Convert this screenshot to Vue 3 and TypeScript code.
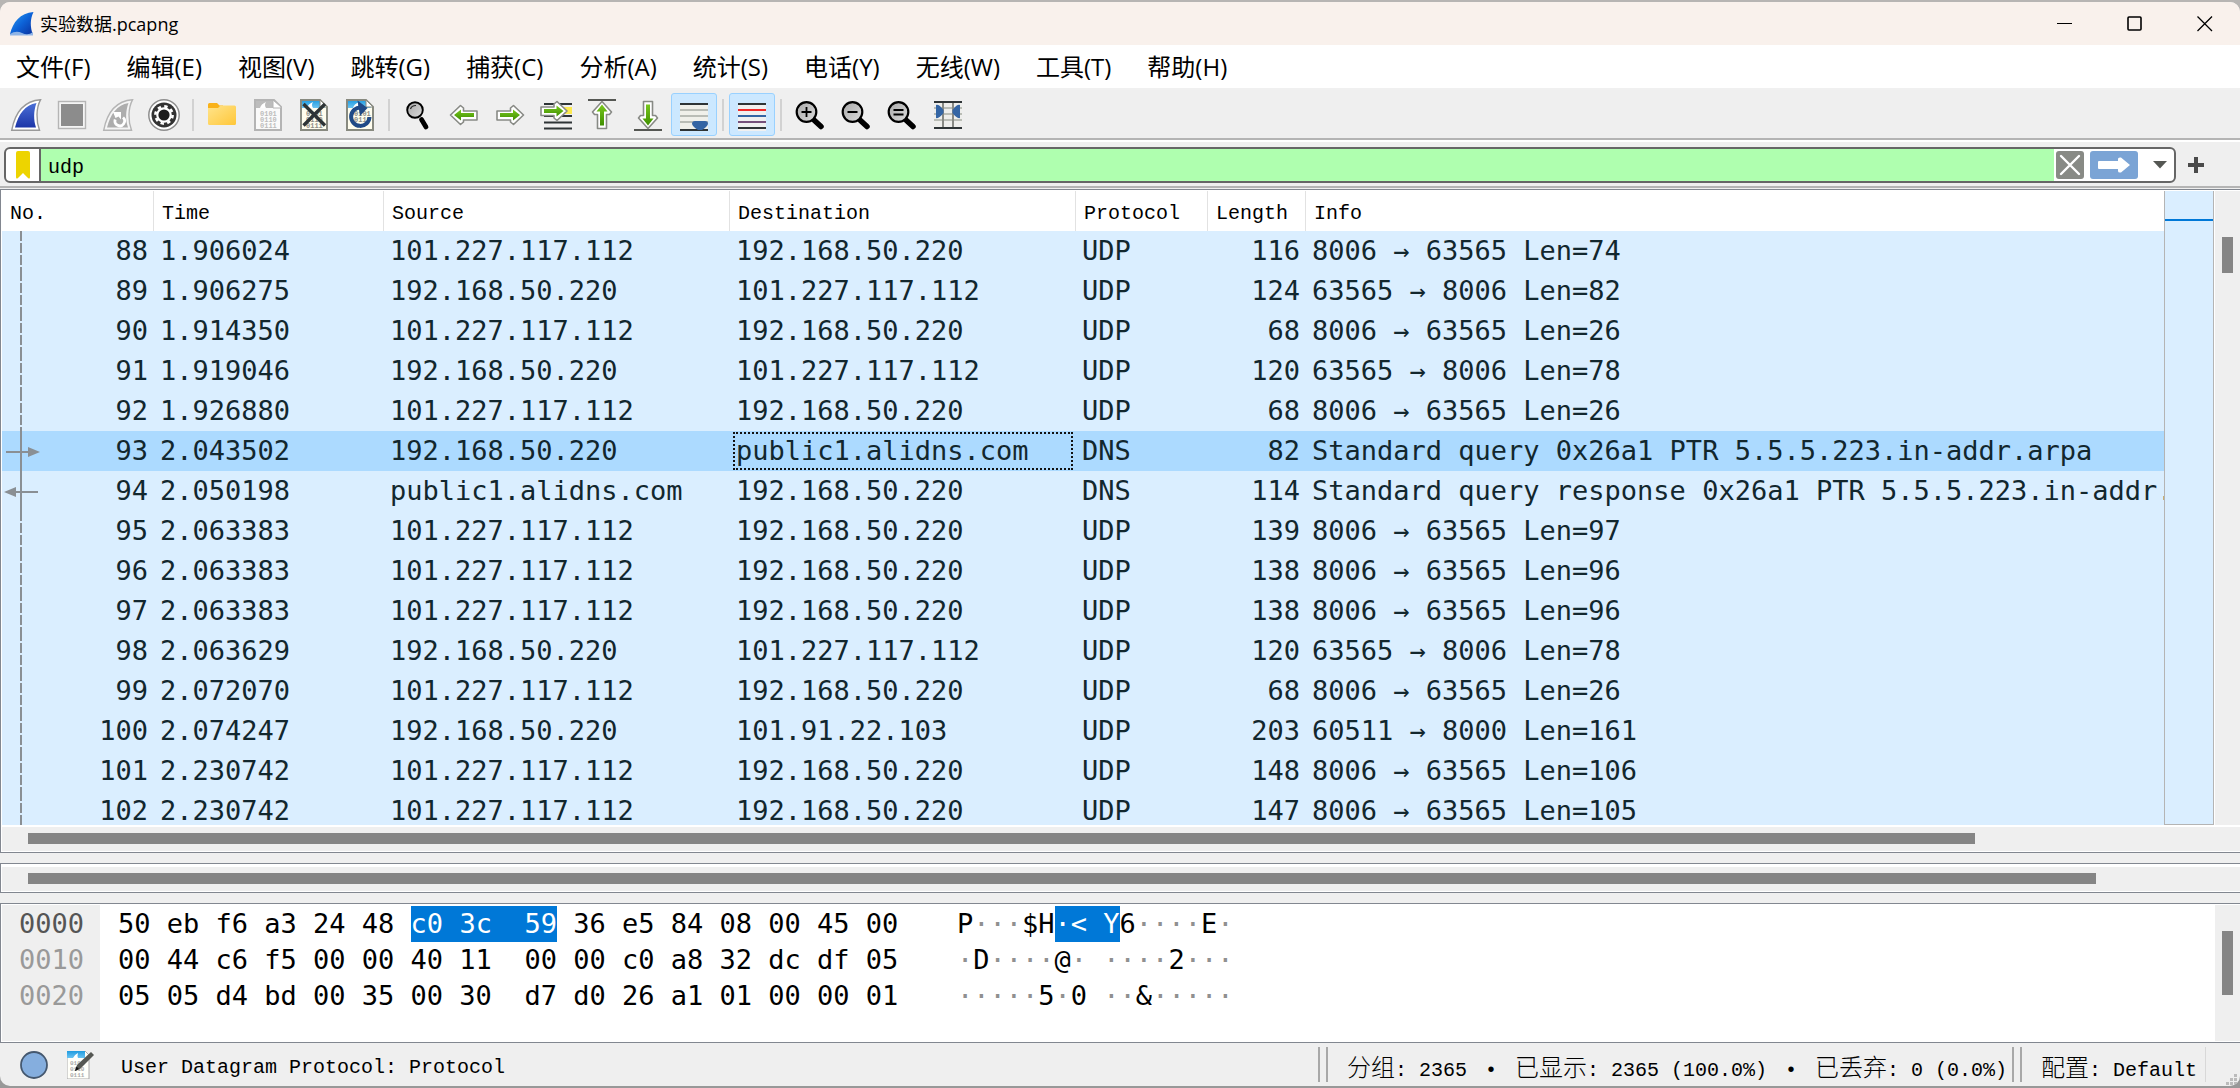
<script setup lang="ts">
import { ref } from 'vue'

interface Packet {
  no: number
  time: string
  src: string
  dst: string
  proto: string
  len: number
  info: string
  link?: 'out' | 'in'
}

interface HexRun {
  text: string
  kind?: 'hl' | 'dim'
}

interface HexLine {
  offset: string
  bytes: HexRun[]
  ascii: HexRun[]
}

const A = '101.227.117.112'
const B = '192.168.50.220'
const D = 'public1.alidns.com'

const menus = ['文件(F)', '编辑(E)', '视图(V)', '跳转(G)', '捕获(C)', '分析(A)', '统计(S)', '电话(Y)', '无线(W)', '工具(T)', '帮助(H)']
const headers = ['No.', 'Time', 'Source', 'Destination', 'Protocol', 'Length', 'Info']

const packets: Packet[] = [
  { no: 88, time: '1.906024', src: A, dst: B, proto: 'UDP', len: 116, info: '8006 → 63565 Len=74' },
  { no: 89, time: '1.906275', src: B, dst: A, proto: 'UDP', len: 124, info: '63565 → 8006 Len=82' },
  { no: 90, time: '1.914350', src: A, dst: B, proto: 'UDP', len: 68, info: '8006 → 63565 Len=26' },
  { no: 91, time: '1.919046', src: B, dst: A, proto: 'UDP', len: 120, info: '63565 → 8006 Len=78' },
  { no: 92, time: '1.926880', src: A, dst: B, proto: 'UDP', len: 68, info: '8006 → 63565 Len=26' },
  { no: 93, time: '2.043502', src: B, dst: D, proto: 'DNS', len: 82, info: 'Standard query 0x26a1 PTR 5.5.5.223.in-addr.arpa', link: 'out' },
  { no: 94, time: '2.050198', src: D, dst: B, proto: 'DNS', len: 114, info: 'Standard query response 0x26a1 PTR 5.5.5.223.in-addr.arpa', link: 'in' },
  { no: 95, time: '2.063383', src: A, dst: B, proto: 'UDP', len: 139, info: '8006 → 63565 Len=97' },
  { no: 96, time: '2.063383', src: A, dst: B, proto: 'UDP', len: 138, info: '8006 → 63565 Len=96' },
  { no: 97, time: '2.063383', src: A, dst: B, proto: 'UDP', len: 138, info: '8006 → 63565 Len=96' },
  { no: 98, time: '2.063629', src: B, dst: A, proto: 'UDP', len: 120, info: '63565 → 8006 Len=78' },
  { no: 99, time: '2.072070', src: A, dst: B, proto: 'UDP', len: 68, info: '8006 → 63565 Len=26' },
  { no: 100, time: '2.074247', src: B, dst: '101.91.22.103', proto: 'UDP', len: 203, info: '60511 → 8000 Len=161' },
  { no: 101, time: '2.230742', src: A, dst: B, proto: 'UDP', len: 148, info: '8006 → 63565 Len=106' },
  { no: 102, time: '2.230742', src: A, dst: B, proto: 'UDP', len: 147, info: '8006 → 63565 Len=105' },
]

const hexLines: HexLine[] = [
  {
    offset: '0000',
    bytes: [{ text: '50 eb f6 a3 24 48 ' }, { text: 'c0 3c  59', kind: 'hl' }, { text: ' 36 e5 84 08 00 45 00' }],
    ascii: [{ text: 'P' }, { text: '···', kind: 'dim' }, { text: '$H' }, { text: '·< Y', kind: 'hl' }, { text: '6' }, { text: '····', kind: 'dim' }, { text: 'E' }, { text: '·', kind: 'dim' }],
  },
  {
    offset: '0010',
    bytes: [{ text: '00 44 c6 f5 00 00 40 11  00 00 c0 a8 32 dc df 05' }],
    ascii: [{ text: '·', kind: 'dim' }, { text: 'D' }, { text: '····', kind: 'dim' }, { text: '@' }, { text: '· ····', kind: 'dim' }, { text: '2' }, { text: '···', kind: 'dim' }],
  },
  {
    offset: '0020',
    bytes: [{ text: '05 05 d4 bd 00 35 00 30  d7 d0 26 a1 01 00 00 01' }],
    ascii: [{ text: '·····', kind: 'dim' }, { text: '5' }, { text: '·', kind: 'dim' }, { text: '0' }, { text: ' ··', kind: 'dim' }, { text: '&' }, { text: '·····', kind: 'dim' }],
  },
]

const selected = ref(93)
const filter = ref('udp')
const listThumb = ref(88)
const detailThumb = ref(93.5)
</script>

<template>
  <div class="desktop">
    <main class="window">
      <header class="titlebar">
        <svg class="logo" viewBox="0 0 24 24">
          <defs>
            <linearGradient id="lg" x1="0" y1="0" x2="1" y2="1">
              <stop offset="0" stop-color="#2fa4f0" /><stop offset=".5" stop-color="#0d63d8" /><stop offset="1" stop-color="#0a2f9c" />
            </linearGradient>
          </defs>
          <path d="M0 22C3 10 10 1 23.500 0C20 7 20 15 23 23H0Z" fill="url(#lg)" />
          <path d="M0 22Q6 18 12 21T23 20V23.500H0Z" fill="#8fb4e6" />
        </svg>
        <h1>实验数据.pcapng</h1>
        <div class="winbtns">
          <button aria-label="Minimize"><svg viewBox="0 0 16 16"><path d="M0 7.500H15" /></svg></button>
          <button aria-label="Maximize"><svg viewBox="0 0 16 16"><rect x="1" y="1" width="13" height="13" rx="1" stroke-width="1.600" /></svg></button>
          <button aria-label="Close"><svg viewBox="0 0 16 16"><path d="M.5.5L15 15M15 .5L.5 15" stroke-width="1.300" /></svg></button>
        </div>
      </header>

      <nav class="menubar">
        <button v-for="m in menus" :key="m">{{ m }}</button>
      </nav>

      <div class="toolbar">
        <svg width="0" height="0" class="defs">
          <defs>
            <linearGradient id="fin" x1="0" y1="0" x2="0" y2="1"><stop offset="0" stop-color="#4a6fd6" /><stop offset="1" stop-color="#1c35a8" /></linearGradient>
            <linearGradient id="fold" x1="0" y1="0" x2="1" y2="1"><stop offset="0" stop-color="#ffe48c" /><stop offset="1" stop-color="#ffc739" /></linearGradient>
            <linearGradient id="grn" x1="0" y1="0" x2="0" y2="1"><stop offset="0" stop-color="#79c81e" /><stop offset="1" stop-color="#3f8f00" /></linearGradient>
            <linearGradient id="sky" x1="0" y1="0" x2="0" y2="1"><stop offset="0" stop-color="#1f9be0" /><stop offset="1" stop-color="#6cc4f2" /></linearGradient>
            <linearGradient id="lens" x1="0" y1="0" x2="1" y2="1"><stop offset="0" stop-color="#a8a8a8" /><stop offset="1" stop-color="#dcdcdc" /></linearGradient>
            <symbol id="doc" viewBox="0 0 32 32">
              <path d="M3 1H22L29 8V31H3Z" fill="#fffdee" />
              <path d="M3 1H22L27 9H3Z" fill="url(#sky)" />
              <path d="M9 9Q10 5 15 3Q13 6 15 9Z" fill="#fff" />
              <path d="M3 1H22L29 8V31H3Z" fill="none" stroke="#888a80" stroke-width="2" />
              <path d="M22 1L29 8H22Z" fill="#fff" stroke="#888a80" />
            </symbol>
            <symbol id="glass" viewBox="0 0 32 32">
              <path d="M20.500 21.500L27 27.500" stroke="#000" stroke-width="5.500" stroke-linecap="round" />
              <circle cx="12.500" cy="13" r="9.800" fill="url(#lens)" stroke="#000" stroke-width="2.200" />
            </symbol>
          </defs>
        </svg>
        <button aria-label="Start capture">
          <svg viewBox="0 0 32 32"><path d="M1.700 31.300C5 14 14 2 30.500.8C26 9 26 22 29.500 31.300Z" fill="#fff" stroke="#9a9a9a" stroke-width="1.400" /><path d="M5 28.500C8.500 15 15 6 26.500 4C23.500 12 23.500 21 26 28.500Z" fill="url(#fin)" /></svg>
        </button>
        <button aria-label="Stop capture">
          <svg viewBox="0 0 32 32"><rect x="2.500" y="2.500" width="27" height="27" fill="#f4f4f4" stroke="#b5b5b5" stroke-width="1.400" /><rect x="5" y="5" width="22" height="22" fill="#8c8c8c" /></svg>
        </button>
        <button aria-label="Restart capture">
          <svg viewBox="0 0 32 32"><path d="M1.700 31.300C5 14 14 2 30.500.8C26 9 26 22 29.500 31.300Z" fill="#f4f4f4" stroke="#b5b5b5" stroke-width="1.400" /><path d="M5 28.500C8.500 15 15 6 26.500 4C23.500 12 23.500 21 26 28.500Z" fill="#adadad" /><path d="M13.200 20.500A4.800 4.800 0 1 0 21 18.500" fill="none" stroke="#fff" stroke-width="2.800" /><path d="M11 13H19V20.500L16.500 17.500L13.500 19Z" fill="#fff" /></svg>
        </button>
        <button aria-label="Capture options">
          <svg viewBox="0 0 32 32"><circle cx="16" cy="16" r="15.200" fill="#fff" stroke="#8e8e8e" stroke-width="1.500" /><circle cx="16" cy="16" r="12.500" fill="#333" /><circle cx="16" cy="16" r="7.800" fill="#fff" /><circle cx="16" cy="16" r="8.600" fill="none" stroke="#fff" stroke-width="2.600" stroke-dasharray="3.400 3.350" /><circle cx="16" cy="16" r="5.600" fill="#1c1c1c" /></svg>
        </button>
        <i class="sep"></i>
        <button aria-label="Open file">
          <svg viewBox="0 0 32 32"><path d="M2 5.500Q2 4 3.500 4H11L13.500 6.500H17V10H2Z" fill="#f9b21a" /><path d="M2 9H12L14.500 6.500H28.500Q30 6.500 30 8V24.500Q30 26 28.500 26H3.500Q2 26 2 24.500Z" fill="url(#fold)" /></svg>
        </button>
        <button aria-label="Save file">
          <svg viewBox="0 0 32 32"><path d="M3 1H22L29 8V31H3Z" fill="#fafafa" stroke="#b4b4b4" stroke-width="2" /><path d="M4 2H21V9H4Z" fill="#bcbcbc" /><path d="M8 9Q9 5 14 3Q12 6 14 9Z" fill="#fff" /><path d="M21 1L29 8V9H21Z" fill="#fff" stroke="#b4b4b4" /><g class="bits faint"><text x="8" y="17">0101</text><text x="8" y="23">0110</text><text x="8" y="29">0111</text></g></svg>
        </button>
        <button aria-label="Close file">
          <svg viewBox="0 0 32 32"><use href="#doc" /><g class="bits"><text x="8" y="17">0101</text><text x="8" y="23">0110</text><text x="8" y="29">0111</text></g><path d="M5.500 5L27 26.500M27 5L5.500 26.500" stroke="#2e3436" stroke-width="3.400" /></svg>
        </button>
        <button aria-label="Reload file">
          <svg viewBox="0 0 32 32"><use href="#doc" /><g class="bits"><text x="10" y="17">0101</text><text x="10" y="23">0110</text></g><path d="M17 8.500A9.200 9.200 0 1 0 25.500 18" fill="none" stroke="#204a87" stroke-width="4" /><path d="M13.500 1.500L23.500 9L16 17Z" fill="#204a87" /></svg>
        </button>
        <i class="sep"></i>
        <button aria-label="Find packet">
          <svg viewBox="0 0 32 32"><path d="M19.500 20.500L24 28" stroke="#000" stroke-width="4.800" stroke-linecap="round" /><circle cx="13" cy="11" r="7.800" fill="url(#lens)" stroke="#000" stroke-width="1.900" /><path d="M8.500 10Q9.500 6.500 14 6.500" fill="none" stroke="#222" stroke-width="1.200" /></svg>
        </button>
        <button aria-label="Go back">
          <svg viewBox="0 0 32 32"><path d="M2.500 16L12.500 6.500L15.500 9V12H29V21H15.500V23L12.500 25.500Z" class="arw" /><path d="M6 16L13 10.500V14H26V18H13V21.500Z" fill="url(#grn)" /></svg>
        </button>
        <button aria-label="Go forward">
          <svg viewBox="0 0 32 32"><path d="M29.500 16L19.500 6.500L16.500 9V12H3V21H16.500V23L19.500 25.500Z" class="arw" /><path d="M26 16L19 10.500V14H6V18H19V21.500Z" fill="url(#grn)" /></svg>
        </button>
        <button aria-label="Go to packet">
          <svg viewBox="0 0 32 32"><path d="M22 8H32V15H22Z" fill="#fce94f" /><path d="M4 5H32M4 17H32M4 23.500H32M4 29.500H32" stroke="#2e3436" stroke-width="2" /><path d="M27 12L17 2.500L14 5V8H1V16.500H14V19L17 21.500Z" class="arw" /><path d="M23.500 12L16.500 6.500V10H4V14H16.500V17.500Z" fill="url(#grn)" /></svg>
        </button>
        <button aria-label="First packet">
          <svg viewBox="0 0 32 32"><path d="M2 1H30" stroke="#555753" stroke-width="2" /><path d="M16 2.500L25.500 13L23.500 15.500H20.500V29.500H11.500V15.500H8.500L6.500 13Z" class="arw" /><path d="M16 5.500L21.500 12.500H18V26.500H14V12.500H10.500Z" fill="url(#grn)" /></svg>
        </button>
        <button aria-label="Last packet">
          <svg viewBox="0 0 32 32"><path d="M2 31H30" stroke="#555753" stroke-width="2" /><path d="M16 29.500L25.500 19L23.500 16.500H20.500V2.500H11.500V16.500H8.500L6.500 19Z" class="arw" /><path d="M16 26.500L21.500 19.500H18V5.500H14V19.500H10.500Z" fill="url(#grn)" /></svg>
        </button>
        <button class="on" aria-label="Auto scroll" aria-pressed="true">
          <svg viewBox="0 0 32 32"><path d="M2 4H30V32H2Z" fill="#f0f0ea" /><path d="M2 11H30M2 17H30M2 23H30" stroke="#babdb6" stroke-width="2" /><path d="M2 5H30M2 31H30" stroke="#2e3436" stroke-width="2" /><path d="M14 25Q14 22 17 22H27Q30 22 30 25Q29 28 24 31H20Q15 28 14 25Z" fill="#3465a4" /></svg>
        </button>
        <i class="sep"></i>
        <button class="on" aria-label="Colorize" aria-pressed="true">
          <svg viewBox="0 0 32 32"><path d="M2 4H30V32H2Z" fill="#f0f0f0" /><path d="M2 5H30M2 29H30" stroke="#2e3436" stroke-width="2" /><path d="M2 11H30" stroke="#ef2929" stroke-width="2" /><path d="M2 17H30" stroke="#3465a4" stroke-width="2" /><path d="M2 23H30" stroke="#75507b" stroke-width="2" /></svg>
        </button>
        <i class="sep"></i>
        <button aria-label="Zoom in"><svg viewBox="0 0 32 32"><use href="#glass" /><path d="M7.500 13H17.500M12.500 8V18" stroke="#000" stroke-width="1.800" /></svg></button>
        <button aria-label="Zoom out"><svg viewBox="0 0 32 32"><use href="#glass" /><path d="M7.500 13H17.500" stroke="#000" stroke-width="1.800" /></svg></button>
        <button aria-label="Normal size"><svg viewBox="0 0 32 32"><use href="#glass" /><path d="M7.500 11H17.500M7.500 15.500H17.500" stroke="#000" stroke-width="1.800" /></svg></button>
        <button aria-label="Resize columns">
          <svg viewBox="0 0 32 32"><path d="M2 4H30V30H2Z" fill="#eeeeec" /><path d="M2 9H30M2 15H30M2 21H30" stroke="#babdb6" stroke-width="2" /><path d="M11 4V30M21 4V30" stroke="#888a85" stroke-width="2" /><path d="M2 3H30M2 29H30" stroke="#2e3436" stroke-width="2" /><path d="M4 6Q7 5 11.500 11V14Q7 20 4 19ZM28 6Q25 5 20.500 11V14Q25 20 28 19Z" fill="#3465a4" /></svg>
        </button>
      </div>

      <div class="filterbar">
        <div class="field">
          <button class="bookmark" aria-label="Bookmark">
            <svg viewBox="0 0 16 28"><path d="M1 2Q1 0 3 0H13Q15 0 15 2V26Q15 28.500 13 27L8 22L3 27Q1 28.500 1 26Z" fill="#edd400" /></svg>
          </button>
          <input v-model="filter" aria-label="Display filter" spellcheck="false" />
          <button class="clear" aria-label="Clear filter">
            <svg viewBox="0 0 28 28"><rect width="28" height="28" rx="3" fill="#888a85" /><path d="M5 5L23 23M23 5L5 23" stroke="#fff" stroke-width="2.400" stroke-linecap="round" /></svg>
          </button>
          <button class="apply" aria-label="Apply filter">
            <svg viewBox="0 0 48 28"><rect width="48" height="28" rx="3" fill="#7ba4d5" /><path d="M9 10H28V8Q28 6 31 6.500L40 14L31 21.500Q28 22 28 20V18H9Q8 18 8 17V11Q8 10 9 10Z" fill="#fff" /></svg>
          </button>
          <button class="drop" aria-label="Filter history"><svg viewBox="0 0 14 8"><path d="M0 0H14L7 7.500Z" fill="#555753" /></svg></button>
        </div>
        <button class="plus" aria-label="Add filter button"><svg viewBox="0 0 16 16"><path d="M0 8H16M8 0V16" stroke="#4a4a4a" stroke-width="4" /></svg></button>
      </div>

      <section class="pane list">
        <div class="listbody">
          <div class="rows">
            <table>
              <colgroup><col class="c-no" /><col class="c-time" /><col class="c-addr" /><col class="c-addr" /><col class="c-proto" /><col class="c-len" /><col /></colgroup>
              <thead>
                <tr><th v-for="h in headers" :key="h" scope="col">{{ h }}</th></tr>
              </thead>
              <tbody>
                <tr v-for="p in packets" :key="p.no" :class="{ sel: p.no === selected }" @click="selected = p.no">
                  <td class="num first">
                    <svg class="rel" width="44" height="40" viewBox="0 0 44 40">
                      <path d="M19 0V40" :stroke-dasharray="p.link ? undefined : '10 2'" />
                      <template v-if="p.link === 'out'"><path d="M4 21H28" /><path class="tip" d="M26 16L38 21L26 26Z" /></template>
                      <template v-if="p.link === 'in'"><path d="M12 21H36" /><path class="tip" d="M14 16L2 21L14 26Z" /></template>
                    </svg>
                    {{ p.no }}
                  </td>
                  <td>{{ p.time }}</td>
                  <td>{{ p.src }}</td>
                  <td :class="{ focus: p.no === selected }">{{ p.dst }}</td>
                  <td>{{ p.proto }}</td>
                  <td class="num">{{ p.len }}</td>
                  <td>{{ p.info }}</td>
                </tr>
              </tbody>
            </table>
          </div>
          <div class="minimap"><i></i></div>
          <div class="vbar"><i class="t1"></i></div>
        </div>
        <div class="hbar"><i :style="{ width: listThumb + '%' }"></i></div>
      </section>

      <section class="pane details">
        <div class="hbar"><i :style="{ width: detailThumb + '%' }"></i></div>
      </section>

      <section class="pane bytes">
        <div class="offsets"><div v-for="(l, i) in hexLines" :key="l.offset" :class="{ cur: i === 0 }">{{ l.offset }}</div></div>
        <div class="hex"><div v-for="l in hexLines" :key="l.offset"><span v-for="(r, i) in l.bytes" :key="i" :class="r.kind">{{ r.text }}</span></div></div>
        <div class="ascii"><div v-for="l in hexLines" :key="l.offset"><span v-for="(r, i) in l.ascii" :key="i" :class="r.kind">{{ r.text }}</span></div></div>
        <div class="vbar"><i class="t2"></i></div>
      </section>

      <footer class="status">
        <button aria-label="Expert information"><svg viewBox="0 0 28 28"><circle cx="14" cy="14" r="13" fill="#85aede" stroke="#45586f" stroke-width="1.800" /></svg></button>
        <button class="comment" aria-label="Capture comment">
          <svg viewBox="0 0 28 28"><path d="M0 0H18L22 4V28H0Z" fill="#fffffa" stroke="#aaa" /><path d="M0 0H18V7H0Z" fill="url(#sky)" /><path d="M6 7Q7 4 11 2Q10 5 11 7Z" fill="#fff" /><g class="bits small"><text x="3" y="14">0101</text><text x="3" y="20">0110</text><text x="3" y="26">0111</text></g><path d="M8 20L10 14L24 1L27 4L13 18Z" fill="#555753" /><path d="M8 20L9.500 15.500L12 18Z" fill="#111" /></svg>
        </button>
        <p class="msg">User Datagram Protocol: Protocol</p>
        <div class="cell"><i></i><b>分组</b>: 2365<em>•</em><b>已显示</b>: 2365 (100.0%)<em>•</em><b>已丢弃</b>: 0 (0.0%)</div>
        <div class="cell prof"><i></i><b>配置</b>: Default</div>
        <svg class="grip" viewBox="0 0 12 12"><path d="M8 0h3v3h-3zM8 4h3v3h-3zM4 4h3v3h-3zM8 8h3v3h-3zM4 8h3v3h-3zM0 8h3v3h-3z" fill="#bbb" /></svg>
      </footer>
    </main>
  </div>
</template>

<style>
body { margin: 0; }
</style>

<style scoped>
* { box-sizing: border-box; }
button { border: 0; padding: 0; background: none; color: inherit; font: inherit; display: flex; align-items: center; justify-content: center; flex: none; }
svg { display: block; flex: none; }
.desktop { height: 100vh; padding: 2px 0; background: linear-gradient(#b7b5b3 50%, #989898 50%); display: flex; flex-direction: column; overflow: hidden; }
.window { flex: 1; min-height: 0; display: flex; flex-direction: column; background: #efefef; border-radius: 10px; overflow: hidden; color: #000; }

.titlebar { height: 43px; flex: none; display: flex; align-items: center; padding-left: 10px; background: #f9f1ec; }
.logo { width: 24px; height: 24px; margin-right: 6px; }
h1 { flex: 1; margin: 0; font: 400 18px/26px "Open Sans", "Noto Sans CJK SC", sans-serif; }
.winbtns { display: flex; }
.winbtns button { width: 70px; height: 40px; }
.winbtns svg { width: 16px; height: 16px; fill: none; stroke: #000; stroke-width: 1; }

.menubar { height: 45px; flex: none; display: flex; gap: 36px; padding-left: 16px; background: #fff; border-bottom: 2px solid #f0f0f0; font: 400 24px/42px "Open Sans", "Noto Sans CJK SC", sans-serif; }

.toolbar { height: 50px; flex: none; display: flex; align-items: center; padding: 1px 0 0 3px; border-bottom: 2px solid #b4b4b4; }
.defs { position: absolute; }
.toolbar button { width: 46px; height: 43px; border-radius: 3px; }
.toolbar button.on { background: #cce8ff; border: 1px solid #99d1ff; }
.toolbar button svg { width: 32px; height: 32px; }
.sep { width: 12px; flex: none; display: flex; justify-content: center; }
.sep::before { content: ""; width: 2px; height: 32px; background: #d2d2d2; }
.arw { fill: #fff; stroke: #888a85; stroke-width: 1.600; stroke-linejoin: round; }
.bits { font: 700 7px "Liberation Mono", monospace; fill: #8e8e86; }
.faint { fill: #bdbdbd; }
.small { font-size: 6px; fill: #aaa; }

.filterbar { height: 48px; flex: none; display: flex; align-items: center; padding: 2px 0 0 4px; border-top: 2px solid #fff; border-bottom: 2px solid #b4b4b4; }
.field { flex: 1; height: 36px; display: flex; align-items: stretch; background: #fff; border: 2px solid #666; border-radius: 6px; overflow: hidden; }
.bookmark { width: 35px; border-right: 2px solid #666; }
.bookmark svg { width: 16px; height: 28px; }
input { flex: 1; min-width: 0; border: 0; outline: 0; padding: 4px 7px 0; background: #afffaf; font: 20px "Liberation Mono", monospace; color: #000; }
.clear { width: 32px; }
.clear svg { width: 28px; height: 28px; }
.apply { width: 56px; }
.apply svg { width: 48px; height: 28px; }
.drop { width: 32px; padding-left: 4px; }
.drop svg { width: 14px; height: 8px; }
.plus { width: 64px; padding-right: 24px; height: 36px; }
.plus svg { width: 16px; height: 16px; }

.pane { background: #fff; border: 1px solid #828790; border-right: 0; padding: 1px 0 1px 1px; }
.list { flex: 1; min-height: 0; display: flex; flex-direction: column; margin-top: 1px; }
.listbody { flex: 1; min-height: 0; display: flex; }
.rows { flex: 1; min-width: 0; overflow: hidden; }
table { width: 100%; table-layout: fixed; border-collapse: separate; border-spacing: 0; font: 27px/39px "DejaVu Sans Mono", monospace; color: #12272e; }
.c-no { width: 152px; }
.c-time { width: 230px; }
.c-addr { width: 346px; }
.c-proto { width: 132px; }
.c-len { width: 98px; }
th { height: 40px; padding: 6px 0 0 8px; border-right: 1px solid #e2e2e2; background: #fff; color: #000; text-align: left; font: 400 20px/34px "Liberation Mono", monospace; }
th:last-child { border-right: 0; }
td { height: 40px; padding: 0 0 0 6px; background: #daeeff; white-space: nowrap; overflow: hidden; vertical-align: top; }
.sel td { background: #acdaff; }
.num { text-align: right; padding-right: 6px; }
.first { position: relative; }
.rel { position: absolute; left: 0; top: 0; fill: none; stroke: #8a8f94; stroke-width: 2; }
.tip { fill: #8a8f94; stroke: none; }
.focus { position: relative; }
.focus::after { content: ""; position: absolute; inset: 1px 3px; border: 2px dotted #111; }
.minimap { width: 50px; flex: none; border: 1px solid #b4b4b4; border-top: 0; background: #daeeff; padding-top: 28px; }
.minimap i { display: block; height: 2px; background: #0078d7; }
.vbar { width: 25px; flex: none; margin-left: 1px; background: #efefef; display: flex; padding-left: 7px; }
.vbar i { width: 11px; background: #858585; }
.t1 { height: 36px; margin-top: 46px; }
.t2 { height: 64px; margin-top: 26px; }
.hbar { height: 24px; flex: none; margin-top: 2px; padding: 6px 0 0 26px; background: #efefef; }
.hbar i { display: block; height: 11px; background: #858585; }
.details { flex: none; margin: 10px 0; }

.bytes { height: 140px; flex: none; display: flex; font: 27px/36px "DejaVu Sans Mono", monospace; white-space: pre; }
.bytes .vbar { margin-left: auto; }
.offsets { width: 98px; background: #efefef; padding: 1px 0 0 17px; color: #999; }
.offsets .cur { color: #555; }
.hex { width: 857px; padding: 1px 0 0 18px; }
.ascii { padding-top: 1px; }
.hl { display: inline-block; background: #0078d7; color: #fff; }
.dim { color: #909090; }

.status { height: 43px; flex: none; display: flex; align-items: center; padding-left: 20px; font: 20px/36px "Liberation Mono", monospace; }
.status button svg { width: 28px; height: 28px; }
.comment { margin-left: 19px; }
.msg { margin: 0 0 0 26px; padding-top: 7px; flex: 1; white-space: pre; }
.cell { height: 35px; width: 694px; flex: none; display: flex; align-items: baseline; white-space: pre; }
.cell i { width: 10px; height: 35px; align-self: flex-start; margin-right: 19px; border: solid #a8a8a8; border-width: 0 2px; }
.cell b { font: 300 24px/37px "Noto Sans CJK SC", sans-serif; }
.cell em { width: 48px; text-align: center; font-style: normal; }
.prof { width: 194px; border-right: 1px solid #d8d8d8; }
.grip { width: 12px; height: 12px; align-self: flex-end; margin-left: 20px; margin-right: 2px; }
</style>
